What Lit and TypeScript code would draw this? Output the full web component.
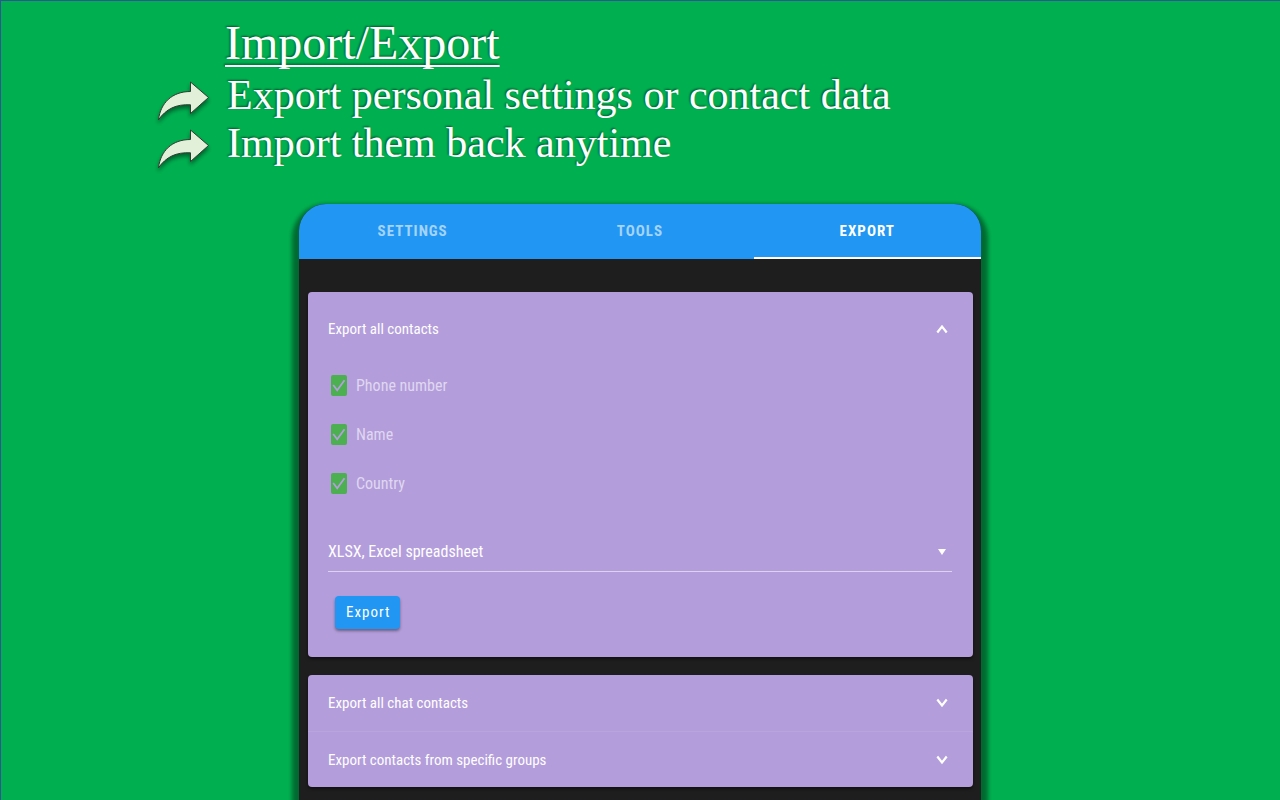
import { LitElement, html, css, svg } from "lit";
import { customElement, state } from "lit/decorators.js";

const POINTS = ["Export personal settings or contact data", "Import them back anytime"];
const FIELDS = ["Phone number", "Name", "Country"];
const TABS = ["Settings", "Tools", "Export"];
const GROUPS = ["Export all chat contacts", "Export contacts from specific groups"];

const chevron = (up: boolean) => html`<svg class="chevron" viewBox="0 0 12 10" aria-hidden="true">
  ${up ? svg`<path d="M1.3 8.5 6 2.5 10.7 8.5" />` : svg`<path d="M1.3 1.5 6 7.5 10.7 1.5" />`}
</svg>`;

@customElement("app-root")
export class AppRoot extends LitElement {
  @state() private tab = "Export";
  @state() private open = true;

  static styles = css`
    :host {
      display: flex;
      flex-direction: column;
      box-sizing: border-box;
      min-height: 100vh;
      overflow: hidden;
      box-shadow: inset 1px 1px #2f5597;
      background: #00b050;
      color: #fff;
      font-family: "Roboto Condensed", "Liberation Sans", Arial, sans-serif;
      font-size: 15px;
    }
    * {
      box-sizing: border-box;
    }
    button,
    select {
      font: inherit;
      color: inherit;
      border: 0;
      background: none;
      cursor: pointer;
    }
    .intro {
      padding: 15px 0 0 157px;
      font-family: "Liberation Serif", "Times New Roman", serif;
      text-shadow: -1px -1px 2px rgba(0, 0, 0, 0.5);
    }
    h1 {
      margin: 0 0 0 68px;
      font-size: 48px;
      font-weight: 400;
      line-height: 56px;
      text-decoration: underline;
      text-decoration-thickness: 2px;
      text-decoration-skip-ink: none;
      text-underline-offset: 6px;
    }
    ul {
      margin: 0;
      padding: 0;
      list-style: none;
    }
    .point {
      display: flex;
      gap: 16px;
      font-size: 42px;
      line-height: 48px;
    }
    .arrow {
      flex: none;
      width: 54px;
      height: 48px;
      overflow: visible;
      filter: drop-shadow(0 3px 2px rgba(0, 0, 0, 0.45));
    }
    .panel {
      flex: 1;
      align-self: center;
      width: 100%;
      max-width: 682px;
      margin-top: 37px;
      border-radius: 27px 27px 0 0;
      background: #1e1e1e;
      box-shadow: 0 7px 4px 7px rgba(0, 0, 0, 0.4);
    }
    .tabs {
      display: grid;
      grid-template-columns: repeat(3, 1fr);
      height: 55px;
      overflow: hidden;
      border-radius: 27px 27px 0 0;
      background: #2196f3;
    }
    .tab {
      padding: 0;
      border-bottom: 2px solid transparent;
      color: rgba(255, 255, 255, 0.6);
      font-weight: 700;
      letter-spacing: 1px;
      text-transform: uppercase;
    }
    .tab.active {
      border-color: #fff;
      color: #fff;
    }
    .cards {
      display: grid;
      gap: 18px;
      padding: 33px 8px 12px 9px;
    }
    .card {
      overflow: hidden;
      border-radius: 4px;
      background: #b39ddb;
      box-shadow: 0 2px 3px rgba(0, 0, 0, 0.5);
    }
    .head {
      display: flex;
      align-items: center;
      justify-content: space-between;
      width: 100%;
      height: 56px;
      padding: 0 25px 0 20px;
      text-align: left;
    }
    .head.tall {
      height: 69px;
      padding-top: 5px;
    }
    .head + .head {
      border-top: 1px solid rgba(255, 255, 255, 0.08);
    }
    .chevron {
      width: 12px;
      height: 10px;
      fill: none;
      stroke: #fff;
      stroke-width: 2.2;
    }
    .body {
      padding: 0 21px 28px 20px;
    }
    .field {
      display: flex;
      align-items: center;
      gap: 9px;
      height: 49px;
      padding-left: 3px;
      color: rgba(255, 255, 255, 0.6);
      font-size: 16px;
    }
    .box,
    .picker {
      display: grid;
      align-items: center;
    }
    .box > *,
    .picker > * {
      grid-area: 1 / 1;
    }
    .box input {
      appearance: none;
      width: 16px;
      height: 21px;
      margin: 0;
      border-radius: 2px;
      background: #4caf50;
    }
    .tick {
      width: 16px;
      height: 21px;
      fill: none;
      stroke: #b39ddb;
      stroke-width: 1.8;
      pointer-events: none;
    }
    .box input:not(:checked) + .tick {
      display: none;
    }
    .picker {
      margin-top: 23px;
      border-bottom: 1px solid rgba(255, 255, 255, 0.55);
    }
    .picker select {
      appearance: none;
      width: 100%;
      height: 40px;
      padding: 0;
      font-size: 16px;
    }
    .picker option {
      color: #1e1e1e;
    }
    .caret {
      justify-self: end;
      width: 8px;
      height: 8px;
      margin-right: 6px;
      fill: #fff;
      pointer-events: none;
    }
    .go {
      display: block;
      height: 33px;
      margin: 24px 0 0 7px;
      padding: 0 10px 2px 11px;
      border-radius: 4px;
      background: #2196f3;
      letter-spacing: 1px;
      box-shadow: 0 2px 3px rgba(0, 0, 0, 0.4);
    }
  `;

  render() {
    return html`
      <header class="intro">
        <h1>Import/Export</h1>
        <ul>
          ${POINTS.map(
            (text) => html`<li class="point">
              <svg class="arrow" viewBox="0 0 54 48" aria-hidden="true">
                <path
                  d="M33.500 11 L51.500 26.500 L33.500 42.500 V33.800 C19 33 9 38 1.500 48.800 C3.500 32 15 20.500 33.500 20.500 Z"
                  fill="#e2f0d9"
                  stroke="#2f3b2f"
                  stroke-width="1"
                />
              </svg>
              <span>${text}</span>
            </li>`
          )}
        </ul>
      </header>
      <main class="panel">
        <div class="tabs" role="tablist">
          ${TABS.map(
            (name) => html`<button
              class="tab ${name === this.tab ? "active" : ""}"
              role="tab"
              aria-selected=${name === this.tab}
              @click=${() => (this.tab = name)}
            >
              ${name}
            </button>`
          )}
        </div>
        <div class="cards">
          <section class="card">
            <button class="head tall" aria-expanded=${this.open} @click=${() => (this.open = !this.open)}>
              <span>Export all contacts</span>${chevron(this.open)}
            </button>
            ${this.open
              ? html`<div class="body">
                  ${FIELDS.map(
                    (name) => html`<label class="field">
                      <span class="box">
                        <input type="checkbox" checked disabled />
                        <svg class="tick" viewBox="0 0 16 21" aria-hidden="true">
                          <path d="M2.2 10 6.2 15.2 13.5 5.2" />
                        </svg>
                      </span>
                      <span>${name}</span>
                    </label>`
                  )}
                  <div class="picker">
                    <select aria-label="File format">
                      <option>XLSX, Excel spreadsheet</option>
                      <option>CSV</option>
                    </select>
                    <svg class="caret" viewBox="0 0 8 8" aria-hidden="true"><path d="M0 2H8L4 8Z" /></svg>
                  </div>
                  <button class="go">Export</button>
                </div>`
              : ""}
          </section>
          <section class="card">
            ${GROUPS.map(
              (name) => html`<button class="head" aria-expanded="false"><span>${name}</span>${chevron(false)}</button>`
            )}
          </section>
        </div>
      </main>
    `;
  }
}
